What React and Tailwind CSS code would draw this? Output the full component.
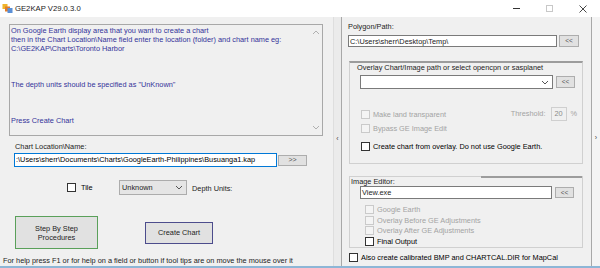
import React from "react";

const F = { fontFamily: '"Liberation Sans", Arial, sans-serif' };

function Check({ disabled = false, label, labelClass = "" }) {
  return (
    <div className="flex items-center h-full">
      <div
        className={
          "w-[9px] h-[9px] border " +
          (disabled ? "border-[#cacaca] bg-[#f4f4f4]" : "border-[#333333] bg-white")
        }
      />
      <span className={"ml-[3px] leading-[9px] " + (disabled ? "text-[#a3a3a3] " : "text-black ") + labelClass}>
        {label}
      </span>
    </div>
  );
}

function SmallBtn({ text = "<<", className = "" }) {
  return (
    <div
      className={
        "bg-[#e1e1e1] border border-[#adadad] flex items-center justify-center text-[6.5px] text-[#555] " +
        className
      }
    >
      {text}
    </div>
  );
}

function Chevron({ dir = "down", className = "" }) {
  const d = dir === "down" ? "M1 1 L4 4 L7 1" : "M1 4 L4 1 L7 4";
  return (
    <svg width="8" height="5" viewBox="0 0 8 5" className={className}>
      <path d={d} fill="none" stroke="currentColor" strokeWidth="1" />
    </svg>
  );
}

export default function App() {
  return (
    <div
      style={F}
      className="w-[600px] h-[268px] bg-[#f0f0f0] flex flex-col overflow-hidden text-[7.35px] text-black"
    >
      {/* Title bar */}
      <div className="h-[17px] bg-white flex items-center shrink-0">
        <svg width="11" height="11" viewBox="0 0 11 11" className="ml-[2px]">
          <rect x="0.5" y="1" width="5" height="5" fill="#f0b429" />
          <rect x="3" y="3.5" width="5" height="5" fill="#e07b2a" />
          <rect x="5.5" y="5" width="5" height="5" fill="#5b8fd6" />
        </svg>
        <span className="ml-[2px] text-[7.7px] text-[#1a1a1a]">GE2KAP V29.0.3.0</span>
        <div className="ml-auto flex items-center h-full">
          <div className="w-[33px] h-full flex items-center justify-center">
            <div className="w-[7px] h-px bg-[#333]" />
          </div>
          <div className="w-[33px] h-full flex items-center justify-center">
            <div className="w-[7px] h-[7px] border border-[#c8c8c8]" />
          </div>
          <div className="w-[33px] h-full flex items-center justify-center">
            <svg width="8" height="8" viewBox="0 0 8 8">
              <path d="M0.5 0.5 L7.5 7.5 M7.5 0.5 L0.5 7.5" stroke="#333" strokeWidth="0.9" />
            </svg>
          </div>
          <div className="w-[1px]" />
        </div>
      </div>

      {/* Body */}
      <div className="flex-1 flex min-h-0">
        {/* Left panel */}
        <div className="w-[333px] flex flex-col shrink-0">
          <div className="mt-[7px] ml-[9px] w-[314px] h-[112px] border border-[#a8a8a8] bg-[#f0f0f0] flex">
            <div className="flex-1 pl-[1px] pt-[1px] text-[#33339a] leading-[9px]">
              <div>On Google Earth display area that you want to create a chart</div>
              <div>then in the Chart Location\Name field enter the location (folder) and chart name eg:</div>
              <div>C:\GE2KAP\Charts\Toronto Harbor</div>
              <div>&nbsp;</div>
              <div>&nbsp;</div>
              <div>&nbsp;</div>
              <div>The depth units should be specified as "UnKnown"</div>
              <div>&nbsp;</div>
              <div>&nbsp;</div>
              <div>&nbsp;</div>
              <div>Press Create Chart</div>
            </div>
            <div className="w-[12px] flex flex-col items-center justify-between py-[5px] text-[#b0b0b0]">
              <Chevron dir="up" />
              <Chevron dir="down" />
            </div>
          </div>

          <div className="mt-[6px] ml-[15px] leading-[9px] text-[#222]">Chart Location\Name:</div>

          <div className="mt-[2px] ml-[14px] flex items-start">
            <div className="w-[263px] h-[14px] bg-white border border-[#0078d7] flex items-center pl-[1px] overflow-hidden whitespace-nowrap">
              :\Users\sherr\Documents\Charts\GoogleEarth-Philippines\Busuanga1.kap
            </div>
            <SmallBtn text=">>" className="ml-[1px] mt-[2px] w-[29px] h-[11px] text-[7px] text-[#333]" />
          </div>

          <div className="mt-[13px] h-[15px] flex items-center">
            <div className="ml-[67px] w-[52px] h-[9px] flex items-center">
              <Check label="Tile" labelClass="ml-[5px]" />
            </div>
            <div className="w-[68px] h-[15px] bg-[#e5e5e5] border border-[#acacac] flex items-center pl-[2px] text-[#222]">
              <span>Unknown</span>
              <Chevron dir="down" className="ml-auto mr-[3px] text-[#555]" />
            </div>
            <span className="ml-[5px] mt-[2px] text-[#222]">Depth Units:</span>
          </div>

          <div className="mt-[21px] flex items-center">
            <div className="ml-[15px] w-[83px] h-[33px] bg-[#e1e1e1] border border-[#5aa05a] flex flex-col items-center justify-center leading-[9px] text-[#222]">
              <span>Step By Step</span>
              <span>Procedures</span>
            </div>
            <div className="ml-[47px] w-[68px] h-[22px] bg-[#e1e1e1] border border-[#4c4c8c] flex items-center justify-center text-[#222]">
              Create Chart
            </div>
          </div>

          <div className="mt-[7px] ml-[3px] leading-[9px] text-[#222] whitespace-nowrap">
            For help press F1 or for help on a field or button if tool tips are on move the mouse over it
          </div>
        </div>

        {/* Splitter */}
        <div className="w-[8px] shrink-0 bg-[#ebebeb] border-l border-[#dedede] flex items-center justify-center text-[7px] text-[#444]">
          <span className="mt-[-4px]">&lsaquo;</span>
        </div>

        {/* Right panel */}
        <div className="w-[251px] shrink-0 border-l border-r border-[#a8a8a8] flex flex-col pl-[5px]">
          <div className="mt-[5px] ml-[1px] leading-[9px] text-[#222]">Polygon/Path:</div>
          <div className="mt-[4px] ml-[1px] flex items-center">
            <div className="w-[209px] h-[12px] bg-white border border-[#7a7a7a] flex items-center pl-[1px] text-[#222]">
              C:\Users\sherr\Desktop\Temp\
            </div>
            <SmallBtn className="ml-[2px] w-[20px] h-[12px]" />
          </div>

          {/* Overlay group */}
          <div className="mt-[14px] ml-[2px] w-[234px] h-[103px] border border-[#d0d0d0] border-t-2 border-t-[#9c9c9c] flex flex-col">
            <div className="mt-[0px] ml-[7px] leading-[9px] text-[#222]">
              Overlay Chart/Image path or select opencpn or sasplanet
            </div>
            <div className="mt-[3px] ml-[10px] flex items-center">
              <div className="w-[193px] h-[14px] bg-white border border-[#7a7a7a] flex items-center">
                <Chevron dir="down" className="ml-auto mr-[3px] text-[#555]" />
              </div>
              <SmallBtn className="ml-[3px] w-[19px] h-[12px]" />
            </div>
            <div className="mt-[18px] ml-[11px] h-[14px] flex items-center pr-[5px]">
              <div className="h-[9px]">
                <Check disabled label="Make land transparent" />
              </div>
              <span className="ml-auto text-[#a3a3a3]">Threshold:</span>
              <div className="ml-[6px] w-[16px] h-[14px] border border-[#cfcfcf] bg-[#f0f0f0] flex items-center pl-[2px] text-[#8a8a8a]">
                20
              </div>
              <span className="ml-[3px] text-[#a3a3a3]">%</span>
            </div>
            <div className="mt-[3px] ml-[11px] h-[9px]">
              <Check disabled label="Bypass GE Image Edit" />
            </div>
            <div className="mt-[9px] ml-[11px] h-[9px]">
              <Check label="Create chart from overlay. Do not use Google Earth." labelClass="text-[#222]" />
            </div>
          </div>

          {/* Image editor group */}
          <div className="mt-[12px] ml-[2px] w-[234px] h-[72px] border-l border-r border-b border-[#d0d0d0] flex flex-col">
            <div className="flex h-[9px]">
              <div className="w-[131px] border-t border-[#d0d0d0] pl-[1px] leading-[9px] text-[#222]">
                <span className="bg-[#f0f0f0]">Image Editor:</span>
              </div>
              <div className="flex-1 border-t-2 border-[#9c9c9c]" />
            </div>
            <div className="mt-[1px] ml-[10px] flex items-center">
              <div className="w-[192px] h-[13px] bg-white border border-[#7a7a7a] flex items-center pl-[1px] text-[#222]">
                View.exe
              </div>
              <SmallBtn className="ml-[3px] w-[19px] h-[11px]" />
            </div>
            <div className="mt-[5px] ml-[15px] h-[11px]">
              <Check disabled label="Google Earth" />
            </div>
            <div className="ml-[15px] h-[11px]">
              <Check disabled label="Overlay Before GE Adjustments" />
            </div>
            <div className="ml-[15px] h-[11px]">
              <Check disabled label="Overlay After GE Adjustments" />
            </div>
            <div className="ml-[15px] h-[11px]">
              <Check label="Final Output" labelClass="text-[#222]" />
            </div>
          </div>

          <div className="mt-[5px] ml-[2px] h-[9px]">
            <Check label="Also create calibrated BMP and CHARTCAL.DIR for MapCal" labelClass="text-[#222]" />
          </div>
        </div>

        {/* Right strip */}
        <div className="w-[8px] shrink-0 bg-[#f4f4f4] flex items-center justify-center text-[7px] text-[#444]">
          <span className="mt-[-6px]">&rsaquo;</span>
        </div>
      </div>

      <div className="h-[2px] bg-[#8db6d6] shrink-0" />
    </div>
  );
}
